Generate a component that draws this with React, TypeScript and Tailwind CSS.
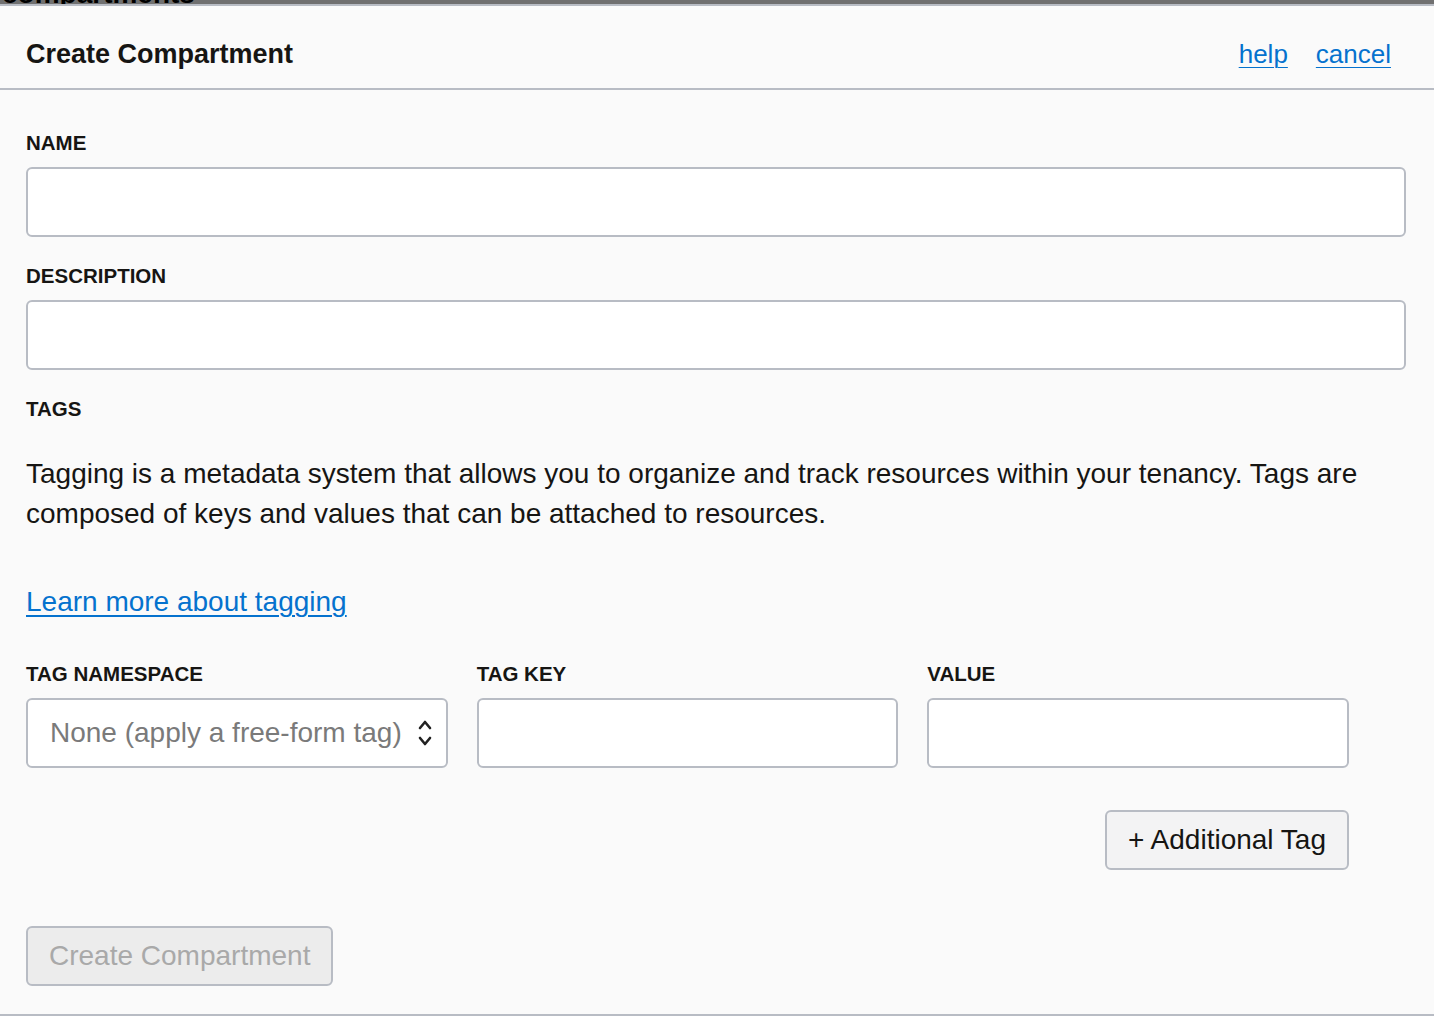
import { ReactElement } from 'react';

const font = { fontFamily: '"Liberation Sans", Arial, sans-serif' };

function FieldLabel({ children }: { children: string }): ReactElement {
  return (
    <div className="h-[24px] text-[20.5px] leading-[24px] font-bold text-[#161513]">
      {children}
    </div>
  );
}

function TextBox({ className = '' }: { className?: string }): ReactElement {
  return (
    <input
      type="text"
      className={`block h-[70px] rounded-[6px] border-2 border-[#b8bcc4] bg-white px-5 outline-none ${className}`}
    />
  );
}

export default function App(): ReactElement {
  return (
    <div className="h-[1016px] w-[1434px] overflow-hidden bg-[#fafafa]" style={font}>
      {/* page behind the dialog peeks through at the top */}
      <div className="h-[4px] overflow-hidden bg-[#707070]">
        <div className="-mt-[18px] pl-[2px] text-[28px] leading-[24px] font-bold text-black">
          compartments
        </div>
      </div>

      <div className="flex h-[1012px] flex-col border-t-2 border-b-2 border-[#b8bcc4]">
        <header className="flex h-[84px] items-center justify-between border-b-2 border-[#b8bcc4] pl-[26px] pr-[43px] pt-[15px]">
          <h2 className="text-[27px] font-bold text-[#161513]">Create Compartment</h2>
          <div className="flex gap-[28px] text-[26px] text-[#0572ce]">
            <a href="#" className="underline underline-offset-4 decoration-1">help</a>
            <a href="#" className="underline underline-offset-4 decoration-1">cancel</a>
          </div>
        </header>

        <form className="flex flex-col pl-[26px] pr-[28px] pt-[41px]">
          <FieldLabel>NAME</FieldLabel>
          <TextBox className="mt-[12px] w-full" />

          <div className="mt-[27px]">
            <FieldLabel>DESCRIPTION</FieldLabel>
          </div>
          <TextBox className="mt-[12px] w-full" />

          <div className="mt-[27px]">
            <FieldLabel>TAGS</FieldLabel>
          </div>
          <p className="mt-[33px] w-[1370px] text-[28px] leading-[40px] text-[#161513]">
            Tagging is a metadata system that allows you to organize and track resources within your
            tenancy. Tags are composed of keys and values that can be attached to resources.
          </p>
          <a
            href="#"
            className="mt-[48px] self-start text-[28px] leading-[40px] text-[#0572ce] underline underline-offset-4 decoration-2"
          >
            Learn more about tagging
          </a>

          <div className="mt-[40px] grid w-[1323px] grid-cols-3 gap-x-[29px]">
            <div>
              <FieldLabel>TAG NAMESPACE</FieldLabel>
              <div className="relative mt-[12px] flex h-[70px] items-center overflow-hidden rounded-[6px] border-2 border-[#b8bcc4] bg-white">
                <span className="w-[377px] overflow-hidden whitespace-nowrap pl-[22px] text-[28px] text-[#7a7a7a]">
                  None (apply a free-form tag)
                </span>
                <svg
                  className="absolute right-[13px] top-[18px]"
                  width="16"
                  height="30"
                  viewBox="0 0 16 30"
                  fill="none"
                  stroke="#222"
                  strokeWidth="2.6"
                  strokeLinecap="round"
                  strokeLinejoin="round"
                >
                  <path d="M3 10 L8 4 L13 10" />
                  <path d="M3 20 L8 26 L13 20" />
                </svg>
              </div>
            </div>
            <div>
              <FieldLabel>TAG KEY</FieldLabel>
              <TextBox className="mt-[12px] w-full" />
            </div>
            <div>
              <FieldLabel>VALUE</FieldLabel>
              <TextBox className="mt-[12px] w-full" />
            </div>
          </div>

          <div className="mt-[42px] flex w-[1323px] justify-end">
            <button
              type="button"
              className="h-[60px] rounded-[6px] border-2 border-[#b8bcc4] bg-[#f3f3f4] px-[21px] text-[28px] text-[#161513]"
            >
              + Additional Tag
            </button>
          </div>

          <div className="mt-[56px]">
            <button
              type="button"
              disabled
              className="h-[60px] rounded-[6px] border-2 border-[#b8bcc4] bg-[#ececec] px-[21px] text-[28px] text-[#a9a9a9]"
            >
              Create Compartment
            </button>
          </div>
        </form>
      </div>
    </div>
  );
}
